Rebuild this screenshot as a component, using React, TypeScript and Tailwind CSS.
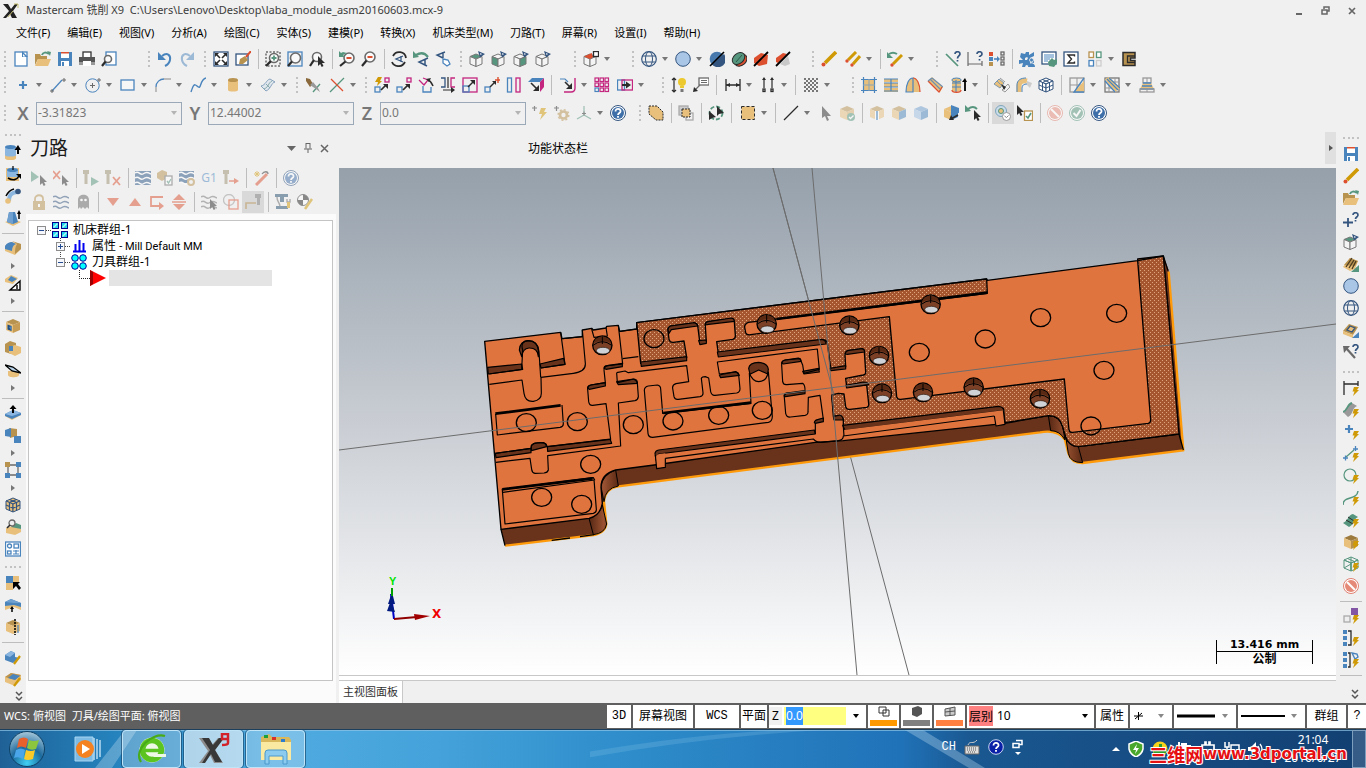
import React from 'react'

const BLUE = '#4a84bd'
const NAVY = '#34557f'
const GRAY = '#6a6a6a'
const TAN = '#e8c07c'
const BROWN = '#b8924f'
const GREEN = '#57967e'
const PINK = '#c4267f'
const RED = '#dc5030'
const GOLD = '#cf9a05'
const INK = '#2b2b2b'

// Small helpers for the 16x16 toolbar drawings
const s = (d: string, stroke: string = GRAY, w = 1.2) => <path d={d} stroke={stroke} strokeWidth={w} fill="none" />
const f = (d: string, fill: string) => <path d={d} fill={fill} />
const box = (x: number, y: number, w: number, h: number, stroke: string, fill = 'none') => (
  <rect x={x} y={y} width={w} height={h} stroke={stroke} strokeWidth={1.3} fill={fill} />
)
const cube = (top: string, left: string, right: string, stroke = 'none') => (
  <g stroke={stroke} strokeWidth={1} strokeLinejoin="round">
    <path d="M8 1 15 4 8 7 1 4Z" fill={top} />
    <path d="M1 4 8 7V15L1 12Z" fill={left} />
    <path d="M15 4 8 7V15L15 12Z" fill={right} />
  </g>
)
const bolt = f('M11 7h5l-2 3h2l-6 6 1.5-4.500H9.500z', GOLD)
const lens = (x: number, y: number, r: number) => (
  <>
    <circle cx={x} cy={y} r={r} stroke={GRAY} strokeWidth={1.6} fill="#fafafa" />
    <path d={`M${x - r * 0.7} ${y + r * 0.7} 1 15`} stroke={INK} strokeWidth={2.2} />
  </>
)
const viewCube = (top: string, left: string, right: string) => (
  <>
    <g stroke="#777" strokeWidth={1}>
      <path d="M7 3 13 5.500 7 8 1 5.500Z" fill={top} />
      <path d="M1 5.500 7 8V15.500L1 13Z" fill={left} />
      <path d="M13 5.500 7 8V15.500L13 13Z" fill={right} />
    </g>
    {f('M9 0 16 3 11 6.500z', NAVY)}
    {f('M11 2 13 3 11.500 4z', '#fff')}
  </>
)
const pencil = (
  <>
    {s('M4 12 15 1', GOLD, 3.6)}
    <circle cx={2.500} cy={13.500} r={2} fill={RED} />
  </>
)
const waves = (c: string) => s('M0 3c4-3 5 3 8 1s4-2 8 0M0 8c4-3 5 3 8 1s4-2 8 0M0 13c4-3 5 3 8 1s4-2 8 0', c, 1.5)
const cursor = f('M9 5v10l2.200-2 1.500 3 1.800-1-1.500-3H16z', INK)
const help = (
  <>
    <circle cx={8} cy={8} r={7.500} fill="#fff" stroke={NAVY} strokeWidth={1} />
    <circle cx={8} cy={8} r={6} fill="#3f6fa8" />
    {s('M5.500 6.500c0-4 5.500-3 5 0-.3 1.500-2.500 1.500-2.500 3.500M8 11v1.800', '#fff', 1.8)}
  </>
)
const noEntry = (
  <>
    <circle cx={8} cy={8} r={7.500} fill="#fff" stroke="#e08070" />
    <circle cx={8} cy={8} r={6} fill="#e58a78" />
    {s('M4 4 12 12', '#fff', 2)}
  </>
)
const solid = (
  <>
    {f('M0 6 6 2l10 2v5l-6 6L0 11z', TAN)}
    {f('M0 6 6 2l10 2-6 5z', BROWN)}
  </>
)
const mill = f('M0 0h6v4H4.500v10h-3V4H0z', '#9a8f70')

const icons: Record<string, React.ReactNode> = {
  new: <>{box(2, 1, 12, 14, BLUE, '#fff')}{f('M9 0l6 6H9z', BLUE)}{f('M10 3l2.500 2.500H10z', '#fff')}</>,
  open: <>{f('M0 3h5l1 2h6v3H3L0 14z', BROWN)}{f('M3 8h13l-3 7H0z', TAN)}{s('M7 4c1-3 4-3 7-1', GREEN, 2)}{f('M12 0l4 1-1 4z', GREEN)}</>,
  save: <>{f('M1 1h14v14H1z', BLUE)}{f('M4 1h8v6H4z', '#fff')}{f('M4 1h8v1.500H4z', RED)}{f('M4 10h8v5H4z', '#fff')}{f('M5 11h2v4H5z', BLUE)}</>,
  print: <>{box(4, 1, 8, 6, '#333', '#fff')}{f('M0 6h16v7H0z', '#555')}{f('M0 11h16v3H0z', '#999')}{f('M4 10h8v5H4z', '#fff')}</>,
  preview: <>{box(5, 1, 10, 13, BLUE, '#fff')}{lens(7, 8, 3.500)}</>,
  undo: <>{s('M5 5c5-4 9-1 8 4-.5 3-3 5-5 6', BLUE, 2)}{f('M1 1v8h8z', BLUE)}</>,
  redo: <>{s('M11 5C6 1 2 4 3 9c.5 3 3 5 5 6', BLUE, 2)}{f('M15 1v8H7z', BLUE)}</>,
  fit: <>{box(1, 1, 14, 14, NAVY, '#fff')}{s('M3 3 7 7M13 3 9 7M3 13 7 9M13 13 9 9', INK, 1.6)}{f('M2 2h4L2 6zM14 2v4l-4-4zM2 14v-4l4 4zM14 14h-4l4-4z', INK)}</>,
  brush: <>{box(1, 3, 12, 11, NAVY, '#fff')}{f('M5 8l5-3 3 4-5 4-4 0z', BROWN)}{s('M11 6 16 0', RED, 2)}</>,
  zoomwin: <><rect x={1} y={1} width={14} height={14} fill="none" stroke={INK} strokeDasharray="2 1.500" />{lens(9, 7, 4.500)}{s('M6.500 7h5M9 4.500v5', GREEN, 1.800)}</>,
  zoomfit: <>{box(1, 1, 14, 14, BLUE)}{lens(8.500, 7, 5)}</>,
  zoomsel: <>{lens(8, 6, 4.500)}{cursor}</>,
  unzoom: <>{lens(10, 7, 5)}{s('M7.500 7h5', RED, 2)}{f('M0 0v6h6L4 4l4-2-4-1-2 1z', GREEN)}</>,
  zoomout: <>{lens(9, 6, 5)}{s('M6.500 6h5', RED, 2)}</>,
  rot: <>{s('M2 5c3-6 12-5 13 2M14 11c-3 6-11 5-13 0', INK, 1.800)}{s('M12 5 5 8l7 3M10 5v6', NAVY, 1.300)}</>,
  prevview: <>{s('M3 4c5-3 9-2 12 2', GREEN, 2.200)}{f('M0 0v7l6-1z', GREEN)}{s('M15 7 6 11l8 4M12 8v6', NAVY, 1.500)}</>,
  dynview: <>{s('M10 1 2 4l6 3M8 1v6', NAVY, 1.400)}<path d="M8 8l5 1 2 4-3 2-4-3z" fill="#fff" stroke={BLUE} strokeWidth={1.300} /></>,
  cubeTop: viewCube(GREEN, '#f4f4f4', '#f4f4f4'),
  cubeFront: viewCube('#f4f4f4', GREEN, '#f4f4f4'),
  cubeSide: viewCube('#f4f4f4', '#f4f4f4', GREEN),
  cubeIso: viewCube('#f4f4f4', '#f4f4f4', '#f4f4f4'),
  cubeRed: <><g stroke="#777"><path d="M7 3 13 5.500 7 8 1 5.500Z" fill={RED} /><path d="M1 5.500 7 8V15.500L1 13Z" fill="#f4f4f4" /><path d="M13 5.500 7 8V15.500L13 13Z" fill="#f4f4f4" /></g>{f('M1 5.500 9 2v5L7 8z', RED)}{box(10.500, 0.500, 5, 5, INK, '#fff')}</>,
  globe: <><circle cx={8} cy={8} r={7.300} fill="none" stroke={NAVY} strokeWidth={1.200} /><ellipse cx={8} cy={8} rx={3.500} ry={7.300} fill="none" stroke={NAVY} /><path d="M1.500 5h13M1.500 11h13" stroke={NAVY} /></>,
  sphere: <circle cx={8} cy={8} r={7.300} fill="#a9c6e6" stroke={NAVY} />,
  sphSlash: <><circle cx={8} cy={8} r={7.300} fill="#4779ad" />{f('M15 3A7.300 7.300 0 0 1 3 13.500z', NAVY)}{s('M1 15 15 1', '#000', 1.600)}</>,
  sphGreen: <><ellipse cx={9.500} cy={9} rx={7} ry={5.500} fill={RED} stroke={INK} transform="rotate(-40 9.500 9)" /><ellipse cx={7.500} cy={7.500} rx={7} ry={5} fill={GREEN} stroke={INK} transform="rotate(-40 7.500 7.500)" /><path d="M5 11 11 4" stroke="#2c5a48" /></>,
  redSlash: <>{f('M1 7l7-5 7 2-1 9-8 2-5-3z', RED)}{s('M1 15 15 1', '#000', 1.800)}</>,
  redwSlash: <>{f('M1 7l7-5 4 1-9 9-2-1z', RED)}{f('M13 5l2 8-5 2-5-2z', '#c8c8c8')}{s('M1 15 15 1', '#000', 1.800)}</>,
  pencil,
  pencil2: <>{s('M3 9 11 1M8 13 15 5', GOLD, 3)}<circle cx={2} cy={10} r={1.700} fill={RED} /><circle cx={7} cy={14} r={1.700} fill={RED} /></>,
  pencilundo: <>{s('M6 13 15 4', GOLD, 3)}<circle cx={5} cy={14} r={1.700} fill={RED} />{s('M2 3c3-2 5-2 8 0', GREEN, 2)}{f('M0 1v6h6z', GREEN)}</>,
  lineq: <>{s('M1 3 13 15', GREEN, 1.700)}{s('M10 3c0-3 5-3 5 0 0 2-2.500 2-2.500 4.500M12.500 9v1.600', NAVY, 1.700)}</>,
  dimq: <>{s('M1 1v14M15 10v5M1 13h14', GRAY, 1.200)}{s('M10 3c0-3 5-3 5 0 0 2-2.500 2-2.500 3M12.500 8v1.600', NAVY, 1.700)}</>,
  mapping: <>{f('M0 1h4v4H0z', RED)}{f('M0 6h4v4H0z', BLUE)}{f('M0 11h4v4H0z', BROWN)}{s('M5 8h5', BLUE, 1.600)}{f('M8 5l3 3-3 3z', BLUE)}{box(12, 1, 3, 3, GRAY)}{box(12, 6, 3, 3, GRAY)}{box(12, 11, 3, 3, GRAY)}</>,
  puzzle: <>{f('M2 2l4 1 1-2 3 0 0 3 5-3v4l-4 2 4 2v3l-4-1 0 4-4-1-1 2H3l1-4-4 1v-4l4 0-3-3z', BLUE)}{f('M6 7l2-1 1 1-1 2-2 0z', '#f0f0f0')}<circle cx={12.500} cy={9} r={2} fill={BLUE} stroke="#f0f0f0" strokeWidth={0.800} />{f('M9 16c0-5 7-5 7 0z', BLUE)}</>,
  report: <>{box(1, 1, 14, 12, NAVY, '#fff')}{s('M3 4h10M3 6h10M3 8h6M3 10h4', BLUE, 1.200)}{f('M7 11l4-4 2 2 3-1v4l-3 4-5-1z', GREEN)}</>,
  sigma: <>{box(1, 1, 14, 14, NAVY, '#fff')}{s('M11.500 5.500V4H5l3.500 4L5 12h6.500v-1.500', INK, 1.400)}</>,
  squares: <>{box(2, 1, 4.500, 5.500, BROWN, '#fff')}{box(9.500, 1, 4.500, 5.500, GREEN, '#fff')}{box(2, 9.500, 4.500, 5.500, BLUE, '#fff')}{box(9.500, 9.500, 4.500, 5.500, '#ccc')}</>,
  shapeC: <><path d="M2 1.500h12V7H9.500v2.500H14v5H2z" fill={BROWN} stroke={INK} strokeWidth={1.500} />{s('M14 5H6.500v6.500H14', INK, 1.300)}</>,

  plus: s('M8 4v8M4 8h8', BLUE, 2.200),
  line: <>{s('M2 14 12 3', BLUE, 1.200)}{s('M0 14h4M2 12v4M12 3h4M14 1v4', GRAY, 1)}</>,
  circle: <><circle cx={7.500} cy={8.500} r={6.700} fill="none" stroke={BLUE} />{s('M5 8.500h5M7.500 6v5M12 3h4M14 1v4', GRAY, 1)}</>,
  rect: box(1, 3, 13, 10, BLUE, '#f6f6f6'),
  fillet: <>{s('M1 15V10', '#888', 1)}{s('M1 10c0-5 4-8 8-8', BLUE, 1.300)}{s('M9 2h7', '#888', 1)}</>,
  spline: s('M1 15c2-6 3-9 6-6 5 5 2-6 9-8', BLUE, 1.400),
  cylinder: <>{f('M3 3v10c0 2 10 2 10 0V3z', TAN)}<ellipse cx={8} cy={3} rx={5} ry={2} fill={BROWN} /></>,
  surf: <><path d="M1 9c5-1 5-6 9-7l5 3c-4 1-4 7-9 9z" fill="#dfe6ee" stroke="#6f8fb0" strokeWidth={0.800} /><path d="M4 12c5-2 4-6 8-8M6 7l4 4" stroke="#8aa" fill="none" /></>,
  trim: <>{s('M8 15 15 7', GREEN, 1.300)}{f('M1 1l4 1 3 5-3 3-4-6z', '#8a6a3d')}{f('M5 8l3-3 5 6 2 4-4-3z', '#999')}</>,
  brk: <>{s('M1 15 15 1', GREEN, 1.300)}{s('M2 2 14 14', RED, 1.300)}</>,
  xfBolt: <>{f('M4 0h4L6 4h2l-5 5 1-4H1z', GOLD)}{box(1, 10, 5, 5, BLUE)}{box(11, 1, 4, 4, PINK)}{s('M7 13 12 8', INK, 1.700)}{f('M14 7v5l-5-5z', INK)}</>,
  xfMove: <>{box(1, 10, 5, 5, BLUE)}{box(11, 1, 4, 4, PINK)}{s('M7 13 12 8', INK, 1.700)}{f('M14 7v5l-5-5z', INK)}</>,
  xfRot: <>{s('M1 3l5 5 4-5-5-2', PINK, 1.300)}{s('M5 9v6h8v-5', BLUE, 1.300)}{s('M10 3c3 1 4 4 5 6', INK, 1.500)}{f('M8 2l5-1-2 4z', INK)}</>,
  mirror: <>{s('M1 1h4v9H1', NAVY, 1.300)}{s('M15 1h-4v9h4', PINK, 1.300)}{s('M8 0v11M3 13h10', INK, 1.200)}{f('M11 10l4 3-4 3z', INK)}</>,
  scale: <>{box(1, 1, 14, 14, PINK)}{box(1, 9, 6, 6, BLUE)}{s('M6 10 12 4', INK, 1.500)}{f('M13 3v5L8 3z', INK)}</>,
  stretch: <>{box(1, 10, 5, 5, BLUE)}{s('M6 10 11 5', INK, 1.500)}{f('M12 4v4L8 4z', INK)}{s('M14 0v6M11 3h5', RED, 1.400)}</>,
  parallel: <>{box(1.500, 1, 4, 14, BLUE)}{box(10, 1, 4, 14, PINK)}</>,
  proj: <>{f('M4 1h12l-4 4H0z', BLUE)}{f('M12 5l4-4v9l-4 5z', PINK)}{s('M3 6 9 12', INK, 1.600)}{f('M11 8v6H5z', INK)}</>,
  arcArrow: <>{s('M0 2h5l3 3', BLUE, 1.200)}{s('M4 15h7c3 0 4-1 4-4V1', PINK, 1.400)}{s('M5 5 10 10', INK, 1.600)}{f('M12 6v6H6z', INK)}</>,
  array: <>{[1, 6, 11].map((x) => [1, 6, 11].map((y) => <rect key={`${x}-${y}`} x={x} y={y} width={3.500} height={3.500} fill="none" stroke={x === 1 && y === 11 ? BLUE : PINK} strokeWidth={1.200} />))}</>,
  offset: <>{box(0.500, 3, 7, 10, BLUE)}{box(5, 3, 10.500, 10, PINK)}{s('M5 8h5', INK, 2)}{f('M9 4.500l5 3.500-5 3.500z', INK)}</>,
  tip: <>{s('M3 1v14M1 3l2-2 2 2M1 13l2 2 2-2', INK, 1.200)}<circle cx={11} cy={5} r={4} fill="#ecc92f" />{f('M9 9h4v2H9z', '#ecc92f')}{f('M9.500 12h3v3h-3z', '#777')}</>,
  note: <>{box(6, 1, 10, 7, GRAY, '#fff')}{s('M8 3.500h6M8 5.500h6M7 8 2 13', GRAY, 1.200)}{f('M0 15l1-5 4 4z', INK)}</>,
  dimH: <>{s('M1 2v12M15 2v12M1 8h14', INK, 1.300)}{f('M1 8l4-2v4zM15 8l-4-2v4z', INK)}</>,
  dimV: <>{s('M4 3v8M12 3v8', INK, 1.200)}{f('M2 3l2-3 2 3zM10 3l2-3 2 3z', INK)}{box(3, 12, 2, 2.500, INK)}{box(11, 12, 2, 2.500, INK)}</>,
  hatch: <>{Array.from({ length: 49 }, (_, i) => (i % 2 === 0 ? <rect key={i} x={1 + (i % 7) * 2} y={1 + Math.floor(i / 7) * 2} width={2} height={2} fill="#777" /> : null))}</>,
  net1: <>{f('M2 2h12v12H2z', TAN)}{s('M2.500 0v16M13.500 0v16M0 2.500h16M0 13.500h16', BLUE, 1.200)}{s('M8 2v12M2 8h12', '#8aa4b8', 1)}</>,
  net2: <>{f('M1 2h14v3H1zM1 6h14v4H1zM1 11h14v4H1z', TAN)}{s('M1 2h14M1 6h14M1 10h14M1 14h14M8 2v12', BLUE, 1.200)}</>,
  cone: <>{f('M1 15C1 7 4 1 8 1s7 6 7 14z', TAN)}{s('M1 15C1 7 4 1 8 1v14z', BLUE, 1.200)}{s('M8 1c4 0 7 6 7 14', RED, 1.200)}</>,
  ruled: <>{f('M1 4l4-4 11 10-3 5z', TAN)}{s('M1 4 12 15l3-5', RED, 1.300)}{s('M3 2 13 12M5 1 1 4M5 1l11 9', '#6f8fb0', 1.200)}</>,
  cyl: <>{f('M1 3v10c0 2 9 2 9 0V3z', TAN)}<ellipse cx={5.500} cy={3} rx={4.700} ry={2} fill={TAN} stroke={BLUE} />{s('M1 6h9M1 10h9M5 3v12', BLUE, 1.100)}{s('M1 13c0 3 9 3 9 0', RED, 1.300)}{s('M14 14V3', '#000', 1.800)}{f('M11 5l3-4 2 4z', '#000')}</>,
  sat: <>{f('M0 7l5-5 5 4-4 5z', TAN)}{s('M0 7l5-5 5 4-4 5zM3 4l5 5', '#7f98ae', 1)}{s('M8 13l6-6 2 3-5 5zM6 1l5 4', '#999', 1)}{f('M7 7l5 3-2 3z', INK)}</>,
  hose: <>{s('M3 15V9c0-4 3-6 8-5', TAN, 5)}{s('M1 15V8c0-5 4-7 9-7M6 15v-4c0-3 2-4 5-4', BLUE, 1)}{f('M11 4l5 2-2 5-3-3z', '#ccc')}</>,
  wireCube: <>{cube('#fff', '#fff', '#fff', NAVY)}{s('M4.500 2.500l7 3v8M11.500 2.500l-7 3v8M1 8l7 3 7-3', NAVY, 1)}</>,
  gridTri: <>{box(1, 1, 14, 14, '#999')}{s('M8 1v14M1 8h14', '#999', 1)}{f('M15 4v11H5z', TAN)}{s('M15 1 5 15h10', BLUE, 1.300)}</>,
  gridband: <>{box(1, 1, 14, 14, '#777')}{s('M5 1v14M11 1v14M1 5h14M1 11h14', '#999', 1)}{f('M1 2l4-2 11 11-5 4z', TAN)}{s('M1 4 11 15M5 1l11 10M3 2l11 11', BLUE, 1.200)}</>,
  lamp: <>{box(4, 1, 8, 5, '#999')}{s('M8 1v14', '#999', 1)}{f('M4 6h8l3 6H1z', TAN)}{s('M4 6h8M3 9h10M1 12h14', BLUE, 1.300)}{box(1, 12, 14, 3, '#999')}</>,

  boltPlus: <>{s('M0 3h5M2.500 1v5', INK, 1.200)}{f('M9 3h5l-2 4h3l-7 8 2-6H7z', GOLD)}</>,
  gearPlus: <>{s('M0 3h5M2.500 1v5', INK, 1.200)}<circle cx={9.500} cy={10} r={3.500} fill="none" stroke={BROWN} strokeWidth={2.600} /><circle cx={9.500} cy={10} r={5.300} fill="none" stroke={BROWN} strokeWidth={1.500} strokeDasharray="2 2.100" /></>,
  axis: <>{s('M8 1v9M8 10 1 14M8 10l7 4', GREEN, 1.300)}{s('M6 8.500h4M8 6.500v4', INK, 1)}</>,
  help,
  noEntry,
  check: <><circle cx={8} cy={8} r={7.500} fill="#fff" stroke={GREEN} /><circle cx={8} cy={8} r={6} fill={GREEN} />{s('M4.500 8l3 3 4-6', '#fff', 2)}</>,
  selAdd: <><path d="M1 1h8l6 6v8H8L1 9z" fill={TAN} stroke={INK} strokeDasharray="2 1" /></>,
  selIn: <>{box(1, 1, 9, 9, '#aaa', '#ccc')}{box(8, 8, 7, 7, '#aaa')}<rect x={4} y={4} width={8} height={8} fill={TAN} stroke={INK} strokeDasharray="2 1" /></>,
  selRot: <><circle cx={8} cy={8} r={6.500} fill="none" stroke={GREEN} strokeWidth={1.800} strokeDasharray="4 2" />{f('M1 6v9l3-2 4-1zM9 1v10l2-2 5-1z', INK)}</>,
  selRect: <rect x={1.500} y={1.500} width={13} height={13} fill={TAN} stroke={INK} strokeDasharray="3 2" />,
  diag: s('M1 15 15 1', INK, 1.300),
  arrow: f('M5 1v12l3-2 2 5 2-1-2-4h4z', INK),
  cubeOk: <>{cube(BROWN, TAN, '#d8ae6c')}<circle cx={12} cy={12} r={4} fill={GREEN} />{s('M10 12l1.500 1.500 3-3', '#fff', 1.300)}</>,
  cubeEdge: <>{cube(BROWN, TAN, TAN)}{f('M6 6h4v9H6z', '#fff')}{f('M7 6h2v9H7z', BLUE)}</>,
  cubeFace: cube(BROWN, TAN, BLUE),
  cubeAll: cube('#6f9fd0', '#9bbfe4', BLUE),
  cubeTurn: <>{cube(TAN, TAN, BLUE)}{f('M8 0l8 3v5L8 7z', BLUE)}{s('M15 10 8 14', INK, 1.600)}{f('M6 15l2-5 3 5z', INK)}</>,
  cursorUndo: <>{s('M3 4c4-3 7-2 9 0', GREEN, 2)}{f('M0 0v7l6-1z', GREEN)}{cursor}</>,
  rings: <><circle cx={6} cy={6} r={5.500} fill="#c9dbe8" stroke="#7fa5bd" /><circle cx={6} cy={6} r={2.500} fill={TAN} stroke={GREEN} /><circle cx={11.500} cy={11.500} r={4} fill="#fff" stroke="#999" />{s('M9.500 11l2 1.500 2-2', '#888', 1)}</>,
  cursorClip: <>{f('M0 0v10l2.200-2 1.500 3 1.600-1-1.300-3H7z', INK)}{box(7.500, 6, 8, 9.500, BROWN, '#fff')}{s('M9 11l2 2 3-5', GREEN, 1.600)}</>,

  playSel: <>{f('M0 1v11l8-5z', GREEN)}{cursor}</>,
  xSel: <>{s('M0 1l7 8M7 1 0 9', RED, 1.800)}{cursor}</>,
  millPlay: <>{mill}{f('M8 7v9l8-4.500z', GREEN)}</>,
  millX: <>{mill}{s('M8 7l7 8M15 7l-7 8', RED, 1.800)}</>,
  wavesBox: <>{f('M0 1h16v14H0z', '#2a5585')}{waves('#fff')}</>,
  solidClip: <>{f('M0 3l5-3 5 2v6l-5 3-5-3z', BROWN)}{box(8, 6, 7, 9, GRAY, '#fff')}{s('M10 11l1.500 2 2.500-4', GREEN, 1.300)}</>,
  wavesGear: <>{f('M0 1h15v12H0z', '#2a5585')}{waves('#fff')}<circle cx={12} cy={12} r={3} fill="#f0f0f0" stroke={BROWN} strokeWidth={2} /></>,
  millArrow: <>{mill}{s('M6 11h7', RED, 1.500)}{f('M11 8l5 3-5 3z', RED)}</>,
  wand: <>{s('M3 15 14 4', RED, 3)}{s('M9 4c2-3 6-3 6 0', '#333', 1.300)}{s('M4 1v6M1 4h6M2 2l4 4M6 2 2 6', GOLD, 1)}</>,
  lock: <>{s('M4 8V5c0-5 8-5 8 0v3', BROWN, 1.800)}{f('M2 7h12v9H2z', BROWN)}{f('M7 10h2v3H7z', '#fff')}</>,
  waves: waves(NAVY),
  ghost: <>{f('M3 15V6c0-7 11-7 11 0v9l-2-2-2 2-2-2-2 2-1-2z', '#666')}<circle cx={6.500} cy={6} r={1.300} fill="#fff" /><circle cx={10.500} cy={6} r={1.300} fill="#fff" /></>,
  down: f('M2 4h12l-6 8z', RED),
  up: f('M2 12h12l-6-8z', RED),
  loop: <>{s('M14 3H2v9h9', RED, 1.800)}{f('M10 8l5 4-5 4z', RED)}</>,
  split: <>{f('M2 6h12L8 0zM2 10h12l-6 6z', RED)}{s('M1 8h14', RED, 1.500)}</>,
  wavesSel: <>{waves('#777')}{cursor}</>,
  shapes: <><circle cx={6} cy={6} r={5.500} fill="none" stroke="#999" strokeWidth={1.300} />{box(6, 6, 9, 9, RED)}</>,
  millStep: <>{s('M1 15V9h8M1 9h10', BROWN, 1.600)}{f('M10 0h6v4h-1v7h-3V4h-2z', '#888')}</>,
  press: <>{f('M0 0h13v3H9v5H5V3H0zM1 12h12v3H1z', '#234e70')}{s('M2 3c0 5 2 4 3 9M12 5v3h3v-3', GRAY, 1.400)}{f('M12 8h3v6h-3z', GOLD)}</>,
  target: <><circle cx={6} cy={6} r={5.500} fill="#fff" stroke="#333" />{f('M6 0.500A5.500 5.500 0 0 1 11.500 6H6zM6 6v5.500A5.500 5.500 0 0 1 .5 6z', '#222')}{s('M8 15 15 5', GOLD, 2.500)}</>,

  extrude: <>{f('M0 10v4c0 3 11 3 11 0v-4z', TAN)}{f('M0 3v8c0 2 11 2 11 0V3z', '#8bb6e0')}<ellipse cx={5.500} cy={3} rx={5.500} ry={2} fill={BLUE} />{s('M13 10V4', '#000', 2)}{f('M9.500 6 13 1l3 5z', '#000')}</>,
  revolve: <>{f('M1 2h13v13H1z', TAN)}{f('M2 4c0-3 11-3 11 0v7H2z', '#8bb6e0')}<ellipse cx={7.500} cy={4} rx={5.500} ry={2} fill={BLUE} />{s('M3 12c5 3 9 2 11-2', '#000', 1.600)}{f('M11 8h5v5z', '#000')}{s('M8 0v4', '#000')}</>,
  sweep: <>{s('M4 13c0-6 2-8 8-9', '#8bb6e0', 4)}<circle cx={3} cy={13} r={2.800} fill={TAN} /><circle cx={13} cy={3.500} r={2.800} fill={NAVY} />{s('M1 8c2-4 4-6 8-7', '#000', 1.500)}</>,
  loft: <>{f('M0 12l8-3 8 3-8 4z', TAN)}{f('M4 2h6l3 10-5 2-6-2z', BLUE)}{f('M4 2h4v12l-6-2z', '#6fa0d0')}{s('M14 9V3', '#000', 1.500)}{f('M12 4l2-4 2 4z', '#000')}</>,
  roundSolid: <>{f('M0 6 6 2l10 2v5l-6 6L0 11z', TAN)}{f('M0 6c2-3 4-4 7-4l4 2c-3 1-4 4-4 7L0 9z', BLUE)}{f('M7 1l9 3v5l-6 5c0-4 0-7 2-10z', BROWN)}</>,
  chamfer: <>{f('M0 4l6-4 7 3-5 6-8-2z', TAN)}{f('M3 5l3-4 6 3-5 3z', BLUE)}<path d="M5 15h10V6z" fill="#fff" stroke="#000" strokeWidth={1.400} /><path d="M12 10v4" stroke="#000" strokeWidth={1.400} /></>,
  shell: <>{cube(BROWN, TAN, '#c79c55')}{f('M2.500 6.500l4 1.500v5l-4-1.500z', '#234e80')}{f('M4 9l2.500-1v5z', BLUE)}</>,
  boolean: <>{f('M0 4l5-3 6 2v8l-5 3-6-2z', BROWN)}{f('M4 7l6-2 6 2v6l-6 3-6-3z', TAN)}{f('M4 6h4v5H4z', BLUE)}</>,
  cutSheet: <>{f('M3 9h11v4c0 3-11 3-11 0z', TAN)}<path d="M0 3l8 2 8 6-9-2z" fill="#b9d3ea" stroke="#000" strokeWidth={1.300} /></>,
  push: <>{f('M0 11l8-4 8 3-9 5z', TAN)}{f('M0 9l8-4 8 3v2l-9 4-7-3z', BLUE)}{f('M0 9l8-4 8 3-9 3z', '#8bb6e0')}{s('M8 8V3', '#000', 2)}{f('M4.500 4 8 0l3.500 4z', '#000')}</>,
  copySolid: <>{f('M4 1l8 1v7l-7 2z', BROWN)}{f('M0 3l6-2v9l-6-1z', BLUE)}{f('M9 9h7v7H9z', BLUE)}</>,
  points: <>{s('M3 3h10v10H3z', GRAY, 1.300)}{f('M0 0h5v5H0z', BROWN)}{f('M11 0h5v5h-5zM0 11h5v5H0zM11 11h5v5h-5z', BLUE)}</>,
  wireSolid: <>{cube(TAN, TAN, TAN, NAVY)}{s('M4.500 2.500l7 3v8M11.500 2.500l-7 3v8M1 8l7 3 7-3', NAVY, 1.200)}</>,
  inspect: <>{f('M1 9l7-2 8 3v3l-6 3-9-2z', TAN)}{f('M6 8l5-4 5 2v4z', GREEN)}<circle cx={7} cy={4} r={3} fill="#eee" stroke={GRAY} strokeWidth={1.300} />{s('M5 6 2 9', INK, 1.600)}</>,
  layout: <>{box(0.500, 1, 15, 14, BLUE, '#fff')}<circle cx={4.500} cy={5} r={2} fill="none" stroke={BLUE} strokeWidth={1.300} />{box(9, 3, 4.500, 4, BLUE)}{box(2.500, 10, 3.500, 3, BLUE)}{s('M8 10h6M8 13h6M11 9v4', BLUE, 1.200)}</>,
  patchSel: <>{f('M1 1h7v7H1z', BLUE)}{f('M8 1h6v7H8zM1 8h7v7H1z', TAN)}{f('M8 7h7l-2 2 3 4-2 2-3-4-3 3z', '#000')}</>,
  bendUp: <>{f('M0 6l8-2 8 3v6L9 10 0 13z', TAN)}{f('M0 5l6-3 10 4v4L9 8 0 9z', BLUE)}{f('M0 5l6-3 10 4-7 0z', '#6fa0d0')}{s('M7 15v-4', '#000', 1.500)}{f('M5 12l2-3 2 3z', '#000')}</>,
  splitSolid: <>{cube(BROWN, TAN, TAN)}<path d="M10 0v16" stroke="#000" strokeWidth={1.500} strokeDasharray="2 1" />{s('M13 6v8', BLUE, 1.200)}</>,
  editStep: <>{f('M0 6l6-4 4 2v4l5 1-7 5-8-3z', BLUE)}{f('M0 6l6-4 4 2-5 4z', '#8bb6e0')}{s('M9 15 15 7', GOLD, 2.200)}</>,
  editSolid: <>{solid}{f('M3 7l5-4 7 2-5 4z', BLUE)}{s('M9 15 15 7', GOLD, 2.200)}</>,

  plusq: <>{s('M5 6v9M0 10.500h10', NAVY, 1.800)}{s('M10 3c0-3 5-3 5 0 0 2-2.500 2-2.500 4M12.500 8v1.600', NAVY, 1.700)}</>,
  ribSurf: <>{f('M0 11l7-9 8 3-3 8-5 2z', TAN)}{f('M1 9l6-7 8 3-3 5z', BROWN)}{s('M3 11l6-9M6 12l5-8M9 13l4-8', '#4a3a20', 1.300)}{f('M16 9v7H8z', GREEN)}</>,
  chipSurf: <>{f('M0 9l6-7 9 3-5 8z', BROWN)}{f('M0 9l10 4v3L0 12z', TAN)}<path d="M4 8l3-4 5 2-3 4z" fill={TAN} stroke={NAVY} strokeWidth={1.300} />{f('M16 10v6H9z', BLUE)}</>,
  arrowq: <>{s('M3 4 12 14', GRAY, 2.200)}{f('M0 2l7 0-6 7z', GRAY)}{s('M10 3c0-3 5-3 5 0 0 2-2.500 2-2.500 4M12.500 8v1.600', NAVY, 1.700)}</>,
  dimBolt: <>{s('M1 1v14M15 1v5M1 4h14', INK, 1.300)}{bolt}</>,
  surfBolt: <>{f('M0 10c5-2 4-8 9-9l5 3c-5 2-4 9-9 11z', '#999')}{s('M0 10c5-2 4-8 9-9', GREEN, 1.800)}{bolt}</>,
  plusBolt: <>{s('M6 1v8M2 5h8', BLUE, 2.200)}{bolt}</>,
  lineBolt: <>{s('M3 11 11 4', GREEN, 1.300)}{s('M0 12h5M2.500 9.500v5M10 3h5M12.500 0v5', BLUE, 1.300)}{bolt}</>,
  circBolt: <><circle cx={7} cy={7} r={6} fill="none" stroke={GREEN} strokeWidth={1.200} />{bolt}</>,
  splBolt: <>{s('M0 15C0 5 14 11 15 1', GREEN, 1.500)}{bolt}</>,
  surfBolt2: <>{f('M0 11c5-2 5-8 10-9l5 3c-5 2-4 8-9 10z', GREEN)}{s('M3 8l7 4M5 5l6 4', INK, 1)}{bolt}</>,
  solidBolt: <>{cube('#9d7a3d', TAN, BROWN)}{bolt}</>,
  wireBolt: <>{cube('none', 'none', 'none', GREEN)}{s('M4.500 2.500l7 3v8M8 1v14M1 12l7-4', GREEN, 1)}{bolt}</>,
  levelBolt: <>{f('M8 0h7v7H8z', '#8355a5')}{box(1, 8, 6, 6, '#aaa', '#eee')}{bolt}</>,
  listBolt: <>{f('M0 0h4v4H0zM0 6h4v4H0zM0 12h4v4H0z', BLUE)}{s('M5 1h3v14H5', INK, 1.300)}{bolt}</>,
  listPenBolt: <>{f('M0 0h4v4H0zM0 6h4v4H0zM0 12h4v4H0z', BLUE)}{s('M5 1h2v14H5', INK, 1.300)}{s('M9 1l5 1 1 3-3 2z', BLUE, 1.400)}{bolt}</>,
}

interface ToolGroup {
  space: string
  // "|" separator, "v" drop-down arrow, "." and "," hairline gaps, "~x" disabled, "=x" pressed
  tools: string
}

const mainToolbar: ToolGroup[] = [
  { space: 'ml-0', tools: 'new open save print preview' },
  { space: 'ml-6', tools: 'undo ~redo' },
  { space: 'ml-0.5', tools: 'fit brush | zoomwin zoomfit zoomsel | unzoom zoomout | rot prevview dynview' },
  { space: 'ml-0.5', tools: 'cubeTop cubeFront cubeSide cubeIso' },
  { space: 'ml-4', tools: 'cubeRed v' },
  { space: 'ml-[14px]', tools: 'globe v sphere v sphSlash sphGreen redSlash redwSlash' },
  { space: 'ml-[14px]', tools: 'pencil , pencil2 v | pencilundo v' },
  { space: 'ml-[14px]', tools: 'lineq dimq mapping | puzzle report sigma , squares v shapeC' },
]

const drawToolbar: ToolGroup[] = [
  { space: 'ml-0', tools: ', plus v . line v . circle v . rect v . fillet v . spline v . cylinder v . surf v .' },
  { space: 'ml-0', tools: 'trim , brk v .' },
  { space: 'ml-0', tools: 'xfBolt xfMove xfRot mirror scale stretch parallel proj | , arcArrow v array . offset v' },
  { space: 'ml-2.5', tools: 'tip note | , dimH v . dimV v | . hatch v' },
  { space: 'ml-[14px]', tools: 'net1 net2 cone ruled , cyl v . | sat hose wireCube | . gridTri v . gridband v . lamp v' },
]

const selectToolbar: ToolGroup[] = [
  { space: 'ml-1.5', tools: 'selAdd | selIn | selRot | , selRect v | . diag v ~arrow ~cubeOk | ~cubeEdge ~cubeFace ~cubeAll | cubeTurn cursorUndo | =rings cursorClip | ~noEntry ~check help' },
]

const pathTools = [
  '~playSel ~xSel | ~millPlay ~millX | ~wavesBox ~solidClip ~wavesGear ~G1 ~millArrow | ~wand | ~help',
  '~lock ~waves ~ghost | ~down ~up ~loop ~split | ~wavesSel ~shapes ~=millStep | ~press ~target',
]

const leftTools = ': . extrude revolve sweep loft | roundSolid v chamfer v | shell boolean cutSheet v | push copySolid v points v wireSolid inspect layout , : patchSel bendUp splitSolid | editStep editSolid'
const rightTools = ': save pencil open plusq cubeTop ribSurf sphere globe chipSurf arrowq , , : dimBolt surfBolt plusBolt lineBolt circBolt splBolt surfBolt2 solidBolt wireBolt noEntry | levelBolt listBolt listPenBolt |'

const menus = ['文件(F)', '编辑(E)', '视图(V)', '分析(A)', '绘图(C)', '实体(S)', '建模(P)', '转换(X)', '机床类型(M)', '刀路(T)', '屏幕(R)', '设置(I)', '帮助(H)']

function Caret({ className = '' }: { className?: string }) {
  return (
    <svg className={`w-[6px] h-[4px] ${className}`} viewBox="0 0 6 4">
      <path d="M0 0h6L3 4z" fill="currentColor" />
    </svg>
  )
}

function Grip({ across = false }: { across?: boolean }) {
  return across ? (
    <div className="w-4 h-[10px] flex items-center justify-between shrink-0">
      {[0, 1, 2, 3].map((i) => <span key={i} className="size-0.5 bg-[#c2c2c2]" />)}
    </div>
  ) : (
    <div className="w-[10px] h-4 flex flex-col items-center justify-between shrink-0">
      {[0, 1, 2, 3].map((i) => <span key={i} className="size-0.5 bg-[#c2c2c2]" />)}
    </div>
  )
}

function Tool({ token, vertical = false }: { token: string; vertical?: boolean }) {
  if (token === '|') {
    return vertical ? (
      <span className="h-2 w-[22px] flex items-center shrink-0"><span className="h-px w-full bg-[#bdbdbd]" /></span>
    ) : (
      <span className="w-2 h-5 flex justify-center shrink-0"><span className="w-px h-full bg-[#bdbdbd]" /></span>
    )
  }
  if (token === ':') return <Grip across={vertical} />
  if (token === '.') return <span className="size-px shrink-0" />
  if (token === ',') return <span className="size-0.5 shrink-0" />
  if (token === 'v') {
    return (
      <button type="button" aria-label="More" className={vertical ? 'h-[13px] w-[22px] flex items-center justify-center shrink-0 text-[#777]' : 'w-3 h-[22px] pl-0.5 flex items-center shrink-0 text-[#777]'}>
        <Caret className={vertical ? '-rotate-90' : ''} />
      </button>
    )
  }
  const off = token.startsWith('~')
  const pressed = token.includes('=')
  const name = token.replace(/[~=]/g, '')
  return (
    <button type="button" aria-label={name} disabled={off} className={`size-[22px] shrink-0 flex items-center justify-center ${pressed ? 'bg-[#d9d9d9]' : ''}`}>
      {name === 'G1' ? (
        <span className="text-[12px] text-[#9dbbd8]">G1</span>
      ) : (
        <svg className={`size-4 ${off ? 'opacity-50' : ''}`} viewBox="0 0 16 16">{icons[name]}</svg>
      )}
    </button>
  )
}

function ToolRow({ tools }: { tools: string }) {
  return <>{tools.split(' ').map((t, i) => <Tool key={i} token={t} />)}</>
}

function Toolbar({ groups }: { groups: ToolGroup[] }) {
  return (
    <>
      {groups.map((g, i) => (
        <div key={i} className={`flex items-center ${g.space}`}>
          <Grip />
          <ToolRow tools={g.tools} />
        </div>
      ))}
    </>
  )
}

function CoordBox({ axis, value }: { axis: string; value: string }) {
  return (
    <label className="flex items-center">
      <span className="w-[26px] text-center text-[18px] leading-5 font-semibold text-[#777]">{axis}</span>
      <span className="flex items-center w-[146px] h-[23px] border border-[#9aa8b8] pl-px pr-1 text-[#b4b4b4]">
        <input defaultValue={value} className="flex-1 min-w-0 bg-transparent text-[12px] text-[#777] outline-none" />
        <Caret />
      </span>
    </label>
  )
}

function Expander({ open, stub = '' }: { open: boolean; stub?: string }) {
  return (
    <svg className="w-[15px] h-4 shrink-0" viewBox="0 0 15 16">
      <path d={`M9 8.500h6${stub}`} stroke="#444" strokeDasharray="1 1" />
      <rect x={0.500} y={4.500} width={8} height={8} fill="#f5f7fa" stroke="#8c8c8c" />
      <path d={open ? 'M2 8.500h5' : 'M2 8.500h5M4.500 6v5'} stroke="#244a90" />
    </svg>
  )
}

function TreePanel() {
  return (
    <ul className="flex-1 ml-0.5 mr-[3px] mb-[22px] bg-white border border-[#c4c4c4] pt-px text-[12px] leading-4 text-black">
      <li className="flex items-center h-4 pl-2">
        <Expander open />
        <svg className="size-4 shrink-0" viewBox="0 0 16 16">
          {[0.5, 9.5].map((x) => [0.5, 9.5].map((y) => (
            <g key={`${x}${y}`}>
              <rect x={x} y={y} width={6} height={6} fill="#1fd8ee" stroke="#00008c" />
              <path d={`M${x + 1} ${y + 5}l4-4`} stroke="#b8f5f0" strokeWidth={1.500} />
            </g>
          )))}
        </svg>
        <span className="pl-[5px]">机床群组-1</span>
      </li>
      <li className="flex items-center h-4 pl-[27px]">
        <Expander open={false} stub="M4.500 0v16" />
        <svg className="size-4 shrink-0" viewBox="0 0 16 16">
          <path d="M2 13.500h13M4.500 6v7M8.500 2v11M12.500 5v8" stroke="#0000f0" strokeWidth={2} />
        </svg>
        <span className="pl-[5px]">属性 <span className="text-[11px] font-['Roboto']">- Mill Default MM</span></span>
      </li>
      <li className="flex items-center h-4 pl-[27px]">
        <Expander open stub="M4.500 0v4" />
        <svg className="size-4 shrink-0" viewBox="0 0 16 16">
          {[4, 12].map((x) => [4, 12].map((y) => <circle key={`${x}${y}`} cx={x} cy={y} r={3.300} fill="#0ff" stroke="#00009c" />))}
        </svg>
        <span className="pl-[5px]">刀具群组-1</span>
      </li>
      <li className="flex items-center h-4 pl-[49px]">
        <svg className="w-3 h-4 shrink-0" viewBox="0 0 12 16"><path d="M1.500 0v8.500H12" fill="none" stroke="#222" strokeDasharray="1 1" /></svg>
        <svg className="w-4 h-4 shrink-0" viewBox="0 0 16 16"><path d="M0 0v16l16-8z" fill="#f00" /><path d="M0 0v16l3-2V2z" fill="#900" /></svg>
        <span className="ml-[3px] w-[163px] h-4 bg-[#e4e4e4]" />
      </li>
    </ul>
  )
}

const plainHoles = [[552, 296], [169, 548], [322, 545], [490, 554], [609, 543], [746, 526], [877, 511], [362, 673], [215, 772], [335, 793], [1712, 233], [1940, 220], [1546, 297], [1348, 337], [1902, 391], [1863, 558]]
const deepHoles = [[397, 316], [890, 252], [1138, 256], [1382, 193], [1227, 347], [1236, 460], [1359, 457], [1511, 442], [1710, 476]]

// Vertical walls that face the viewer
const walls = [
  'M53 382 155 372 158 388 55 402Z', 'M210 372 281 355 285 373 213 384Z', 'M148 330Q150 303 175 302 203 303 205 330L205 350Q203 323 177 324 158 325 155 350Z',
  'M512 366 650 350 650 362 514 379Z', 'M742 336 1055 298Q1068 300 1068 312L745 351Z', 'M594 270Q594 260 602 258L672 248Q682 250 683 258L604 269 597 280Z',
  'M706 255Q706 246 714 245L785 234Q793 236 793 244L716 253Z', 'M686 302 709 300 709 310 690 314Z', 'M353 445Q353 436 362 435L406 428 406 438 358 448Z',
  'M402 385Q402 378 412 377L457 370 457 380 408 388Z', 'M440 425 490 417Q500 420 502 430L445 434Z', 'M748 405 797 395Q806 398 808 406L752 413Z',
  'M935 370Q936 361 945 360L985 354Q994 356 993 364L940 372Z', 'M998 394 1046 385 1048 396 1002 402Z', 'M942 468Q943 460 950 459L1005 452 1005 461 946 470Z',
  'M1080 385 1127 377 1127 387 1083 392Z', 'M1126 342Q1126 333 1136 331L1176 326Q1184 328 1184 336L1132 343Z', 'M1128 436 1180 426Q1194 426 1196 434L1130 444Z',
  'M76 640 183 625 183 638 78 653Z', 'M184 622Q184 612 195 609L220 608Q228 610 230 620L184 632Z', 'M232 620 420 597 425 610 233 634Z',
  'M555 640Q556 632 566 630L1033 570 1036 582 566 642 558 660Z', 'M1033 548Q1034 540 1045 538L1060 534 1060 545 1036 550Z', 'M1090 530 1110 525Q1120 530 1120 540L1092 540Z',
  'M1118 556 1585 499Q1600 500 1602 512L1125 571Z', 'M836 385Q838 368 866 367 893 370 895 388L893 402 866 390 840 403Z',
]

// Pocket, step and slot edges on the top faces
const edges = [
  'M272 277 285 373 213 384M155 388 158 330Q150 303 175 302 203 303 207 335L212 412M58 402 155 388M58 433 156 420 162 460Q166 486 190 484 215 480 214 458L213 412 310 400Q348 395 346 370L337 270M278 296 337 290',
  'M365 267 372 292 412 288 408 262M445 256 458 372 412 377Q402 380 402 390L406 428 362 435Q352 438 353 448L356 485Q358 497 368 496L408 491 422 598 232 620 228 612Q215 604 195 610L184 616 183 625 76 640',
  'M450 274 500 267M458 356 505 350M440 398 465 393 475 398 650 377 656 425 618 431Q606 435 608 445L612 470Q615 480 625 478L690 470Q700 468 699 458L694 415Q696 410 706 410L716 414 722 455Q725 467 735 466L800 459Q810 456 810 446L806 405Q803 395 795 396L748 402 742 366 1042 327 1048 388 1002 400 M440 398 442 428 492 417Q502 418 502 428L505 470Q504 480 495 482L445 489 452 618 233 647 235 690Q233 698 222 699L195 700Q186 698 185 688L180 655 78 667',
  'M77 522 82 585 270 562Q280 560 280 552L276 495',
  'M523 450Q524 440 535 438L562 435Q572 437 572 447L578 520 843 490 838 400M895 395 907 530Q906 545 895 547L548 592Q535 592 534 580L523 450',
  'M1002 400 998 375 990 356 945 360Q934 363 935 375L938 425Q940 435 950 434L998 430Q1006 435 1005 455L950 460Q942 464 943 472L947 520Q950 533 962 531L1005 526Q1015 524 1014 515L1015 472 1050 466 1060 538',
  'M586 655 1030 597Q1040 608 1055 607L1105 602Q1120 600 1120 588L1573 528',
  'M97 750 105 852 370 820Q380 817 379 808L372 718M95 748 370 713 374 720 99 757',
  'M1120 560 1122 588M1085 465 1092 530M1036 550 1036 582',
]

function Viewport() {
  return (
    <svg className="absolute inset-0 w-full h-full" viewBox="339 168 997 507" preserveAspectRatio="xMidYMid slice">
      <defs>
        <pattern id="dots" width={12} height={12} patternUnits="userSpaceOnUse">
          <rect width={12} height={12} fill="#a5562f" />
          <rect width={3} height={3} fill="#dfa57e" />
          <rect x={6} y={6} width={3} height={3} fill="#dfa57e" />
        </pattern>
        <linearGradient id="fillet" x1="0" x2="1">
          <stop offset="0" stopColor="#552612" />
          <stop offset="0.5" stopColor="#9a5232" />
          <stop offset="1" stopColor="#5a2913" />
        </linearGradient>
      </defs>
      <path d="M773 168 909 675" stroke="#6c6c6c" strokeWidth={1} />

      <g transform="translate(470 240) scale(0.33333)" strokeLinejoin="round">
        {/* Body and its highlighted lower edge */}
        <path d="M93 868 105 917 365 886Q405 880 410 852L402 785Q405 745 445 739L1710 577Q1760 565 1785 600L1795 640Q1805 670 1838 669L2140 631 2096 90 2080 48 1500 200 400 600Z" fill="#69331b" />
        <path d="M105 917 365 886Q405 880 409 852L402 785Q405 745 445 739L1710 577Q1765 568 1785 600L1795 640Q1805 670 1838 669L2140 631 2096 95" fill="none" stroke="#ff9a0a" strokeWidth={7} />
        <path d="M393 740Q397 705 437 690L445 738Q405 745 402 785ZM357 835Q390 825 397 795L410 852Q405 880 370 884Z" fill="url(#fillet)" stroke="#000" strokeWidth={3} />
        <path d="M1735 527Q1770 528 1778 560L1785 600Q1770 572 1742 572ZM1787 590Q1795 620 1825 620L1838 668Q1800 668 1795 640Z" fill="url(#fillet)" stroke="#000" strokeWidth={3} />
        <path d="M93 868 105 917M2127 582 2140 630M2080 48 2094 92M245 901 300 894M330 890 372 884" stroke="#000" strokeWidth={4} fill="none" />

        {/* Top face */}
        <path d="M44 304 272 277 276 296 337 290 337 270 365 265 370 270 408 264 410 259 445 256 449 274 500 267 500 248 1550 117 1552 121 2003 62 2003 57 2080 48 2127 582 1825 620Q1795 618 1787 590L1778 560Q1768 525 1735 527L1605 550 1120 602 1036 607 553 675 437 690Q393 702 393 742L397 790Q390 828 357 835L93 868Z" fill="#e0743f" stroke="#000" strokeWidth={4} />
        <path
          d="M500 248 1550 117 1552 160 920 237 835 247Q823 252 824 262L827 278Q830 286 842 284L1258 230 1280 470Q1282 479 1292 478L1783 417 1797 570Q1799 578 1808 577L2035 550Q2042 548 2042 540L2003 62 2080 48 2127 582 1825 620Q1795 618 1787 590L1778 560Q1768 525 1735 527L1605 548 1600 505 1120 560 1120 540Q1118 525 1090 528L1085 465 1105 460 1122 462 1127 500Q1130 510 1140 508L1190 502Q1198 500 1196 490L1190 435 1130 440 1127 415 1180 405Q1188 403 1187 395L1183 335Q1182 325 1172 327L1135 332Q1125 335 1125 345L1127 380 1083 390 1072 310Q1070 298 1058 300L745 340 740 305 788 298Q797 296 796 286L793 245Q792 235 782 236L714 245Q704 248 706 258L709 305 690 312 683 256Q680 248 670 250L602 258Q592 262 594 272L597 298Q600 308 610 307L642 303 650 352 512 370Z"
          fill="url(#dots)"
          stroke="#000"
          strokeWidth={4}
        />
        {walls.map((d) => <path key={d} d={d} fill="#69331b" stroke="#000" strokeWidth={3.500} />)}
        {/* Slot ends that break through the side */}
        <path d="M557 655Q558 644 568 642L586 640 586 682 560 686Z" fill="#e0743f" />
        <path d="M1120 570 1600 511 1605 553 1578 558 1573 530 1122 588Z" fill="#e0743f" />
        <path d="M556 645 560 686 586 682 586 655M1600 511 1605 553 1578 558 1573 528" fill="none" stroke="#000" strokeWidth={3.500} />
        {edges.map((d) => <path key={d} d={d} fill="none" stroke="#000" strokeWidth={3.500} />)}
        <path d="M76 521 272 496M97 748 368 715M580 519 843 488M920 237 1552 158" stroke="#000" strokeWidth={8} fill="none" />

        {plainHoles.map(([x, y]) => <ellipse key={`${x}-${y}`} cx={x} cy={y} rx={30} ry={27} fill="none" stroke="#000" strokeWidth={4} />)}
        <path d="M838 400Q848 425 866 425 890 424 894 398" fill="none" stroke="#000" strokeWidth={3.500} />
        {deepHoles.map(([x, y]) => (
          <g key={`${x}-${y}`}>
            <ellipse cx={x} cy={y} rx={29} ry={28} fill="#7c4026" stroke="#000" strokeWidth={4} />
            <path d={`M${x - 27} ${y - 6}Q${x} ${y - 22} ${x + 27} ${y - 6}L${x + 20} ${y - 20} ${x} ${y - 28} ${x - 20} ${y - 20}Z`} fill="#5a2913" />
            <path d={`M${x} ${y - 27}V${y - 4}M${x - 28} ${y}Q${x} ${y - 22} ${x + 28} ${y}`} fill="none" stroke="#000" strokeWidth={3} />
            <ellipse cx={x + 2} cy={y + 16} rx={20} ry={10} fill="#cfd3d8" stroke="#2b1208" strokeWidth={2} />
          </g>
        ))}
      </g>

      {/* Construction axes */}
      <path d="M812 168 857 675M339 450 1336 324M773 168 834 395" stroke="#6c6c6c" strokeWidth={1} fill="none" />

      {/* Gnomon */}
      <path d="M394 619 391 594" stroke="#0000c8" strokeWidth={2} />
      <path d="M394 619 417 617" stroke="#900000" strokeWidth={2} />
      <path d="M414 614 430 616 415 620Z" fill="#a00000" />
      <path d="M388 604 392 592 395 604ZM387 611 391 600 395 612Z" fill="#001a80" />
      <path d="M392 588v8" stroke="#00a000" strokeWidth={2} />
      <text x={389} y={585} fontSize={11} fontWeight={700} fill="#00e400" fontFamily="Liberation Sans">Y</text>
      <text x={432} y={618} fontSize={12} fontWeight={700} fill="#f00000" fontFamily="DejaVu Sans">X</text>
    </svg>
  )
}

function StatusBar() {
  const cell = 'h-[23px] bg-white flex items-center justify-center text-[12px] text-black shrink-0'
  return (
    <footer className="h-[26px] bg-[#5f5f5f] flex items-center shrink-0">
      <p className="pl-1 text-[11px] text-white whitespace-pre">WCS: 俯视图  刀具/绘图平面: 俯视图</p>
      <div className="ml-auto flex items-center gap-0.5">
        <button type="button" className={`${cell} w-6 font-['Liberation_Mono']`}>3D</button>
        <button type="button" className={`${cell} w-[60px]`}>屏幕视图</button>
        <button type="button" className={`${cell} w-11 font-['Liberation_Mono']`}>WCS</button>
        <button type="button" className={`${cell} w-[26px]`}>平面</button>
        <div className={`${cell} w-[97px]`}>
          <label htmlFor="depth" className="w-[13px] text-center bg-[#f0f0f0]">Z</label>
          <input id="depth" defaultValue="0.0" autoFocus onFocus={(e) => e.target.select()} className="flex-1 min-w-0 h-[18px] ml-0.5 pl-0.5 bg-[#ffff80] outline-none text-[12px] selection:bg-[#3399ff] selection:text-white" />
          <button type="button" aria-label="Depth list" className="w-5 h-full flex items-center justify-center"><Caret /></button>
        </div>
        {[
          { name: '线框颜色', bar: 'bg-[#ff9900]', icon: <path d="M1 1h7v6H1zM5 4h6v6H5z" fill="none" stroke="#333" /> },
          { name: '实体颜色', bar: 'bg-[#808080]', icon: <path d="M1 2 7 0l4 2v6L6 11 1 9z" fill="#555" /> },
          { name: '曲面颜色', bar: 'bg-[#ff8040]', icon: <path d="M1 3l10-2v8L1 10zM6 2v8M1 6l10-1" fill="#ccc" stroke="#555" /> },
        ].map((c) => (
          <button key={c.name} type="button" aria-label={c.name} className="w-[31px] h-[23px] bg-white flex flex-col items-center justify-between p-0.5 pt-px shrink-0">
            <svg className="w-3 h-[11px]" viewBox="0 0 12 11">{c.icon}</svg>
            <span className={`w-full h-1.5 ${c.bar}`} />
          </button>
        ))}
        <div className={`${cell} w-[127px] relative`}>
          <label htmlFor="level" className="w-[26px] h-5 pt-0.5 bg-[#ff8080] border-l-2 border-white text-center">层别</label>
          <select id="level" className="flex-1 h-full pl-1 appearance-none bg-white outline-none"><option>10</option></select>
          <Caret className="absolute right-1.5 pointer-events-none" />
        </div>
        <button type="button" className={`${cell} w-8`}>属性</button>
        {[
          { name: '点样式', width: 'w-[42px]', art: <path d="M4 6h9M8.500 2v8M5 9l7-6" stroke="#000" /> },
          { name: '线型', width: 'w-[62px]', art: <path d="M3 6h38" stroke="#000" strokeWidth={3} /> },
          { name: '线宽', width: 'w-[67px]', art: <path d="M3 6h44" stroke="#000" strokeWidth={2} /> },
        ].map((o) => (
          <div key={o.name} className={`${cell} relative ${o.width}`}>
            <select aria-label={o.name} className="w-full h-full appearance-none bg-transparent outline-none"><option></option></select>
            <svg className="absolute left-0 w-[50px] h-3 pointer-events-none" viewBox="0 0 50 12">{o.art}</svg>
            <Caret className="absolute right-2 pointer-events-none text-[#888]" />
          </div>
        ))}
        <button type="button" className={`${cell} w-[39px]`}>群组</button>
        <button type="button" className={`${cell} w-[18px] font-['Liberation_Mono']`}>?</button>
      </div>
    </footer>
  )
}

function Taskbar() {
  const task = 'w-[59px] h-[38px] rounded-sm border border-[#bfe3f7] ring-1 ring-[#123c60]/60 flex items-center justify-center'
  return (
    <nav className="relative h-[39px] shrink-0 flex items-center overflow-hidden border-t border-[#1d3f5e] bg-linear-to-r from-[#1a5c93] via-[#2a80c6] to-[#123d6d]">
      <svg className="absolute inset-0 w-full h-full" viewBox="0 0 1366 39" preserveAspectRatio="none">
        <defs>
          <linearGradient id="glow" x1="0" x2="1">
            <stop offset="0" stopColor="#1f6197" />
            <stop offset="0.08" stopColor="#2581bb" />
            <stop offset="0.2" stopColor="#4fabe0" />
            <stop offset="0.32" stopColor="#45a2da" />
            <stop offset="0.45" stopColor="#2f8ecb" />
            <stop offset="0.66" stopColor="#2072b8" />
            <stop offset="0.71" stopColor="#1a5891" />
            <stop offset="1" stopColor="#123f72" />
          </linearGradient>
        </defs>
        <path d="M0 0h1366v39H0z" fill="url(#glow)" />
        <path d="M905 0h18l62 39h-16zM95 39 125 0h12l-25 39z" fill="#bcdcf2" opacity={0.350} />
        <path d="M590 22q120-20 200-22h30Q700 8 590 28z" fill="#9bd0f0" opacity={0.200} />
        <path d="M0 0h1366v1H0z" fill="#8fc4e6" opacity={0.700} />
      </svg>

      <button type="button" aria-label="开始" className="relative ml-2 size-[38px] shrink-0">
        <svg viewBox="0 0 38 38">
          <defs>
            <radialGradient id="orb" cx="0.5" cy="0.9" r="0.9">
              <stop offset="0" stopColor="#3fd0f5" />
              <stop offset="0.5" stopColor="#1d6a9d" />
              <stop offset="1" stopColor="#a8c8da" />
            </radialGradient>
          </defs>
          <circle cx={19} cy={19} r={17.500} fill="url(#orb)" stroke="#0e4166" />
          <path d="M11 9q5-3 9 0l-2 9q-5-3-9 0z" fill="#e8602c" />
          <path d="M21 10q5 2 10 0l-3 9q-5 2-9-1z" fill="#8cc63f" />
          <path d="M8 20q5-3 9 0l-2 9q-5-3-9-1z" fill="#4aa6e8" />
          <path d="M18 20q5 2 9 0l-2 9q-6 2-9 0z" fill="#fbc928" />
        </svg>
      </button>
      <button type="button" aria-label="媒体播放器" className="relative ml-7 w-7 h-[26px]">
        <svg viewBox="0 0 28 26">
          <path d="M1 1h18v24H1z" fill="#7dbbe4" stroke="#a8d6f2" />
          <path d="M20 2v22M23 3v20M26 4v17" stroke="#b8dcf2" strokeWidth={1.500} />
          <circle cx={11} cy={13} r={9} fill="#f58220" />
          <path d="M8 8l8 5-8 5z" fill="#fff" />
        </svg>
      </button>
      <div className="relative ml-5 flex gap-[3px]">
        <button type="button" aria-label="浏览器" className={`${task} bg-white/25`}>
          <svg className="size-8" viewBox="0 0 32 32">
            <circle cx={16} cy={17} r={12.500} fill="#eef8e6" />
            <circle cx={16} cy={17} r={9.500} fill="none" stroke="#5cc420" strokeWidth={5.500} />
            <path d="M8 17.500h19" stroke="#5cc422" strokeWidth={3.500} />
            <path d="M19 21h11v3H17z" fill="#eef8e6" />
            <path d="M5 29C-3 17 16-1 29 3" fill="none" stroke="#48ab18" strokeWidth={2.200} />
          </svg>
        </button>
        <button type="button" aria-label="Mastercam X9" className={`${task} bg-white/60`}>
          <svg className="size-8" viewBox="0 0 32 32">
            <path d="M1 5h9l4 7 6-7h6l-9 12 8 13h-9l-4-8-6 8H1l9-12z" fill="#8c8c8c" />
            <path d="M4 5h7l4 7 6-7h5l-9 12 7 12h-7l-4-8-6 9H4l8-13z" fill="#383838" />
            <path d="M30 6h-6V1h6v9q0 2-6 2" fill="none" stroke="#d2222a" strokeWidth={2.500} />
          </svg>
        </button>
        <button type="button" aria-label="资源管理器" className={`${task} bg-white/25`}>
          <svg className="size-8" viewBox="0 0 32 32">
            <path d="M1 4l8-3 3 3h17l2 3v20H1z" fill="#d9b85c" />
            <path d="M1 9h30v18H1z" fill="#fae9a0" />
            <path d="M4 2h4v3H4z" fill="#1ba03c" /><path d="M12 4h4v3h-4z" fill="#d8302a" /><path d="M21 6h4v3h-4z" fill="#2c7cd0" />
            <path d="M5 31V20q0-3 3-3h16q3 0 3 3v11h-4v-8H9v8z" fill="#8ccbf0" stroke="#4a98cc" />
          </svg>
        </button>
      </div>

      {/* Tray */}
      <div className="relative ml-auto flex items-center h-full text-white">
        <div className="flex items-center gap-2 pb-1">
          <span className="text-[12px] font-['Liberation_Mono'] leading-3">CH</span>
          <svg className="w-4 h-4" viewBox="0 0 16 16"><path d="M1 7h14v8H1z" fill="#ddd" stroke="#666" /><path d="M3 9h10M3 11h10M4 13h8" stroke="#555" strokeDasharray="1 1" /><path d="M4 6c2-5 5 0 9-5" stroke="#ccc" fill="none" /></svg>
          <svg className="size-4" viewBox="0 0 16 16"><circle cx={8} cy={8} r={7.300} fill="#0a1fa8" stroke="#c8d4f0" /><path d="M5.500 6.500c0-4 5.500-3 5 0-.3 1.500-2.500 1.500-2.500 3.500M8 11v1.800" stroke="#fff" strokeWidth={1.800} fill="none" /></svg>
          <svg className="w-3 h-4" viewBox="0 0 12 16"><path d="M4 1.500h6v4H7M1 4.500h6v4H1z" fill="none" stroke="#fff" strokeWidth={1.500} /><path d="M3 13h6l-3 3z" fill="#fff" /></svg>
        </div>
        <div className="flex items-center gap-2 ml-[88px]">
          <svg className="w-2 h-1" viewBox="0 0 8 4"><path d="M0 4h8L4 0z" fill="#fff" /></svg>
          <svg className="size-4" viewBox="0 0 16 16"><path d="M8 0l7 3v5q-1 5-7 8Q2 13 1 8V3z" fill="#49a82c" stroke="#fff" strokeWidth={1.500} /><path d="M9 3 5 9h3l-1 4 4-6H8z" fill="#fff" /></svg>
          <svg className="size-4" viewBox="0 0 16 16"><circle cx={8} cy={8} r={7.500} fill="#f6d21c" /><path d="M1 8h14a7 7 0 0 1-14 0zM7 3h3v10H7z" fill="#2e9c2c" /></svg>
          <svg className="size-4" viewBox="0 0 16 16"><path d="M3 1v15" stroke="#fff" strokeWidth={2} /><path d="M5 2h6v2h4v7H9V9H5z" fill="#fff" /></svg>
          <svg className="size-4" viewBox="0 0 16 16"><path d="M2 4h3V1h1v3h3V1h1v3h4v6q0 3-6 3-6 0-6-3z" fill="none" stroke="#fff" strokeWidth={1.700} /></svg>
          <svg className="size-4" viewBox="0 0 16 16"><path d="M1 1v5h4V1M3 6v6h8M7 4h8v7H7z" fill="none" stroke="#fff" strokeWidth={1.500} /></svg>
          <svg className="size-4" viewBox="0 0 16 16"><path d="M0 6h3l5-5v14l-5-5H0z" fill="#fff" /><path d="M10 5q2 3 0 6M12 3q4 5 0 10" fill="none" stroke="#fff" strokeWidth={1.300} /></svg>
        </div>
        <div className="ml-3 w-[74px] text-center text-[12px] leading-[18px]">
          <div>21:04</div>
          <div>2016/6/27</div>
        </div>
        <button type="button" aria-label="显示桌面" className="ml-0.5 w-[14px] h-full border border-[#7f9fbf] bg-white/15" />
        <p className="absolute right-[19px] top-[14px] flex items-center whitespace-nowrap leading-5 text-[15px] font-bold text-[#e60f12] font-['DejaVu_Sans'] [-webkit-text-stroke:2px_white] [paint-order:stroke_fill]">
          <span className="text-[18px] font-['Noto_Sans_CJK_SC']">三维网</span>www.3dportal.cn
        </p>
      </div>
    </nav>
  )
}

function Strip({ tools }: { tools: string }) {
  return <>{tools.split(' ').map((t, i) => <Tool key={i} token={t} vertical />)}</>
}

function MoreTools() {
  return (
    <button type="button" aria-label="More tools" className="block h-3 w-2 shrink-0">
      <svg viewBox="0 0 8 12"><path d="M1 2l3 3 3-3M1 7l3 3 3-3" fill="none" stroke="#555" strokeWidth={1.500} /></svg>
    </button>
  )
}

export default function App() {
  return (
    <div className="h-screen flex flex-col overflow-hidden bg-[#f0f0f0] text-[#1e1e1e] font-['Noto_Sans','Noto_Sans_CJK_SC',sans-serif]">
      {/* Title Bar */}
      <header className="h-[21px] flex items-center shrink-0 pl-[3px] text-[#3c3c3c]">
        <svg className="w-4 h-4" viewBox="0 0 16 16">
          <path d="M0 1h5l3 5 4-5h3l-5 7 4 7H9L7 11l-4 4H0l6-7z" fill="#222" />
          <path d="M11 1h4v4M5 14l5-6" stroke="#c8c070" fill="none" />
        </svg>
        <h1 className="pl-[7px] text-[11px] whitespace-pre">Mastercam 铣削 X9  C:\Users\Lenovo\Desktop\laba_module_asm20160603.mcx-9</h1>
        <div className="ml-auto flex items-center gap-[18px] pr-2.5 text-[#666]">
          <button type="button" aria-label="Minimize"><svg className="w-2 h-2" viewBox="0 0 8 8"><path d="M1 7h6" stroke="currentColor" strokeWidth={2} /></svg></button>
          <button type="button" aria-label="Restore"><svg className="w-[9px] h-[9px]" viewBox="0 0 9 9"><path d="M3 3V1h5v4H6M1 4h5v4H1z" fill="none" stroke="currentColor" strokeWidth={1.500} /></svg></button>
          <button type="button" aria-label="Close"><svg className="w-2 h-2" viewBox="0 0 8 8"><path d="M1 1l6 6M7 1 1 7" stroke="currentColor" strokeWidth={1.700} /></svg></button>
        </div>
      </header>

      {/* Menu */}
      <nav className="h-6 flex items-center shrink-0 pl-4 gap-[17px] text-[11px] text-black">
        {menus.map((m) => <button key={m} type="button">{m}</button>)}
      </nav>

      {/* Toolbars */}
      <div className="h-7 flex items-center shrink-0"><Toolbar groups={mainToolbar} /></div>
      <div className="h-6 flex items-center shrink-0"><Toolbar groups={drawToolbar} /></div>
      <div className="h-[33px] pb-px flex items-center shrink-0">
        <Grip />
        <CoordBox axis="X" value="-3.31823" />
        <CoordBox axis="Y" value="12.44002" />
        <CoordBox axis="Z" value="0.0" />
        <div className="flex items-center ml-[3px]"><ToolRow tools="~boltPlus ~gearPlus ~axis v help" /></div>
        <Toolbar groups={selectToolbar} />
      </div>

      <div className="flex-1 min-h-0 flex">
        {/* Solids tools */}
        <aside className="w-[26px] shrink-0 flex flex-col items-center">
          <Strip tools={leftTools} />
          <span className="self-end pr-[3px]"><MoreTools /></span>
        </aside>

        {/* Toolpath manager */}
        <section className="w-[310px] shrink-0 flex flex-col bg-[#fbfbfb]">
          <div className="bg-[#f0f0f0]">
            <div className="h-9 flex items-center pl-1 pr-[7px] text-[#666]">
              <h2 className="text-[19px] text-[#1a1a1a]">刀路</h2>
              <div className="ml-auto flex items-center gap-2">
                <button type="button" aria-label="Panel menu"><svg className="w-[9px] h-[5px]" viewBox="0 0 9 5"><path d="M0 0h9L4.500 5z" fill="currentColor" /></svg></button>
                <button type="button" aria-label="Pin"><svg className="w-2 h-[10px]" viewBox="0 0 8 10"><path d="M2 0v5.500M6 0v5.500M2 .5h4M0 6h8M4 6v4" stroke="currentColor" fill="none" /></svg></button>
                <button type="button" aria-label="Close panel"><svg className="w-[9px] h-[9px]" viewBox="0 0 9 9"><path d="M1 1l7 7M8 1 1 8" stroke="currentColor" strokeWidth={1.500} /></svg></button>
              </div>
            </div>
            {pathTools.map((row) => <div key={row} className="h-6 pl-0.5 flex items-center"><ToolRow tools={row} /></div>)}
          </div>
          <div className="flex-1 flex flex-col pt-1.5"><TreePanel /></div>
        </section>

        {/* Graphics window */}
        <main className="flex-1 min-w-0 ml-[3px] flex flex-col">
          <div className="h-[38px] shrink-0 flex items-start justify-between">
            <p className="pl-[189px] pt-2.5 text-[12px] leading-[18px] text-black">功能状态栏</p>
            <button type="button" aria-label="Expand" className="mt-0.5 w-[11px] h-8 bg-[#e0e0e0] flex items-center justify-center text-[#555]"><Caret className="-rotate-90" /></button>
          </div>
          <div className="relative flex-1 min-h-0 bg-linear-to-b from-[#95a0ab] from-0% via-[#c9cdd3] via-50% to-white to-100%">
            <Viewport />
            <div className="absolute right-[23px] bottom-[11px] w-[97px] flex flex-col text-center text-black font-['DejaVu_Sans','Noto_Sans_CJK_SC'] font-bold text-[11px] border-x border-black">
              <span className="h-3 leading-[10px] border-b border-black">13.416 mm</span>
              <span className="h-3 leading-[14px] text-[12px]">公制</span>
            </div>
          </div>
          <div className="h-7 shrink-0 flex flex-col items-start">
            <div className="w-full h-1.5 border-y border-[#c8c8c8] bg-white" />
            <button type="button" className="h-[22px] px-1 bg-white border-r border-[#c8c8c8] text-[11px] text-[#333]">主视图面板</button>
          </div>
        </main>

        {/* Quick tools */}
        <aside className="w-[30px] shrink-0 flex flex-col items-center py-[3px]">
          <Strip tools={rightTools} />
          <span className="mt-auto self-end pr-[7px]"><MoreTools /></span>
        </aside>
      </div>

      <StatusBar />
      <Taskbar />
    </div>
  )
}
